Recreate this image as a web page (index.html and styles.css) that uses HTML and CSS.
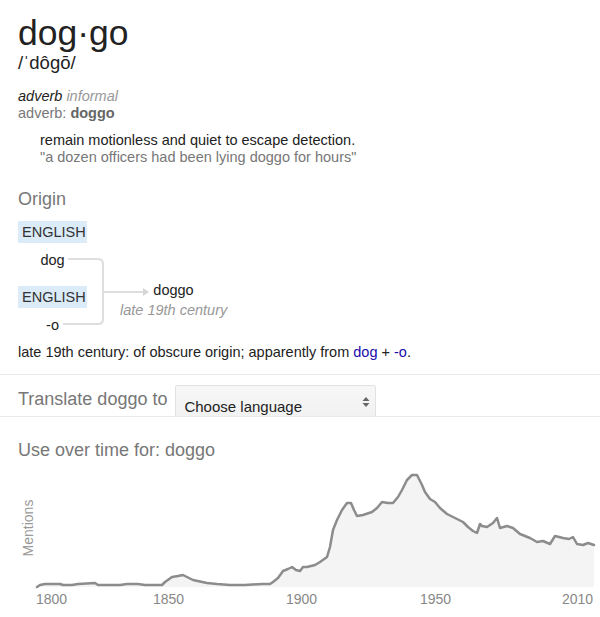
FILE: index.html
```html
<!DOCTYPE html>
<html lang="en">
<head>
<meta charset="utf-8">
<title>doggo</title>
<link rel="stylesheet" href="styles.css">
</head>
<body>
<div class="page">
  <section class="entry">
    <h1 class="word">dog·go</h1>
    <div class="pron">/ˈdôgō/</div>
    <div class="pos">
      <div><i class="pos-main">adverb</i> <i class="pos-note">informal</i></div>
      <div class="pos-forms">adverb: <b>doggo</b></div>
    </div>
    <div class="def">
      <div class="def-text">remain motionless and quiet to escape detection.</div>
      <div class="def-example">"a dozen officers had been lying doggo for hours"</div>
    </div>
    <h2 class="section-title">Origin</h2>
    <div class="diagram">
      <div class="sources">
        <div class="source">
          <span class="lang">ENGLISH</span>
          <span class="src-word">dog</span>
        </div>
        <div class="source">
          <span class="lang">ENGLISH</span>
          <span class="src-word">-o</span>
        </div>
      </div>
      <div class="result">
        <div class="res-word">doggo</div>
        <div class="res-date">late 19th century</div>
      </div>
      <svg class="connectors" width="160" height="115" viewBox="0 0 160 115" aria-hidden="true">
        <path d="M50 38 H80 Q85 38 85 43 V98 Q85 103 80 103 H45" fill="none" stroke="#dedede" stroke-width="2"/>
        <path d="M86 71 H126" fill="none" stroke="#dedede" stroke-width="2"/>
        <path d="M125 67 L131 71 L125 75 Z" fill="#d6d6d6"/>
      </svg>
    </div>
    <p class="etym">late 19th century: of obscure origin; apparently from <span class="link">dog</span> + <span class="link">-o</span>.</p>
  </section>
  <div class="translate">
    <span class="translate-label">Translate doggo to</span>
    <div class="select">
      <span>Choose language</span>
      <svg class="select-arrows" width="8" height="12" viewBox="0 0 8 12" aria-hidden="true">
        <path d="M4 1 L7.5 5 H0.5 Z" fill="#666"/>
        <path d="M4 11 L7.5 7 H0.5 Z" fill="#666"/>
      </svg>
    </div>
  </div>
  <section class="usage">
    <h2 class="section-title usage-title">Use over time for: doggo</h2>
    <svg class="chart" width="600" height="156" viewBox="0 461 600 156">
      <path class="area" d="M37 587 L40 585 L45 584 L60 584 L63 585 L72 585 L78 584 L95 583 L98 585 L120 585 L127 584 L138 584 L145 585 L162 585 L165 582 L172 577 L178 576 L183 575 L187 577 L193 580 L207 583 L217 584 L230 585 L245 585 L262 584 L270 584 L273 582 L278 578 L283 571 L288 569 L292 567 L296 570 L300 571 L303 567 L307 567 L315 565 L320 562 L327 557 L330 547 L333 530 L337 520 L342 510 L347 503 L351 503 L354 510 L357 516 L363 515 L372 512 L377 508 L382 502 L388 503 L393 503 L398 497 L402 490 L407 480 L412 475 L417 475 L422 485 L425 492 L430 499 L435 502 L440 508 L447 514 L455 518 L463 522 L468 527 L473 531 L477 533 L480 524 L482 526 L487 527 L493 523 L497 518 L500 528 L507 526 L513 528 L520 534 L530 538 L537 542 L543 541 L550 544 L555 536 L563 538 L569 539 L573 537 L577 544 L583 545 L588 543 L594 545 L594 587 Z"/>
      <path class="line" d="M37 587 L40 585 L45 584 L60 584 L63 585 L72 585 L78 584 L95 583 L98 585 L120 585 L127 584 L138 584 L145 585 L162 585 L165 582 L172 577 L178 576 L183 575 L187 577 L193 580 L207 583 L217 584 L230 585 L245 585 L262 584 L270 584 L273 582 L278 578 L283 571 L288 569 L292 567 L296 570 L300 571 L303 567 L307 567 L315 565 L320 562 L327 557 L330 547 L333 530 L337 520 L342 510 L347 503 L351 503 L354 510 L357 516 L363 515 L372 512 L377 508 L382 502 L388 503 L393 503 L398 497 L402 490 L407 480 L412 475 L417 475 L422 485 L425 492 L430 499 L435 502 L440 508 L447 514 L455 518 L463 522 L468 527 L473 531 L477 533 L480 524 L482 526 L487 527 L493 523 L497 518 L500 528 L507 526 L513 528 L520 534 L530 538 L537 542 L543 541 L550 544 L555 536 L563 538 L569 539 L573 537 L577 544 L583 545 L588 543 L594 545"/>
      <text class="axis-label" x="33" y="528" transform="rotate(-90 33 528)" text-anchor="middle">Mentions</text>
      <text class="year" x="36" y="604">1800</text>
      <text class="year" x="153" y="604">1850</text>
      <text class="year" x="286" y="604">1900</text>
      <text class="year" x="420" y="604">1950</text>
      <text class="year" x="562" y="604">2010</text>
    </svg>
  </section>
</div>
</body>
</html>
```
FILE: styles.css
```css
html, body {
  margin: 0;
  padding: 0;
  background: #fff;
}

body {
  font-family: "Liberation Sans", Arial, sans-serif;
  font-size: 14.5px;
  color: #222;
}

.page {
  width: 600px;
  height: 617px;
  overflow: hidden;
}

.entry {
  padding: 13px 18px 0;
  border-bottom: 1px solid #ebebeb;
  padding-bottom: 13px;
}

.word {
  margin: 0;
  font-size: 35.5px;
  font-weight: normal;
  line-height: 40px;
  color: #222;
}

.pron {
  font-size: 18.5px;
  line-height: 20px;
  color: #222;
}

.pos {
  margin-top: 15px;
  line-height: 17px;
}

.pos-main {
  color: #222;
}

.pos-note {
  color: #999;
}

.pos-forms {
  color: #777;
}

.pos-forms b {
  color: #666;
}

.def {
  margin-top: 10px;
  padding-left: 22px;
  line-height: 17px;
}

.def-example {
  color: #777;
}

.section-title {
  margin: 22px 0 0;
  font-size: 18px;
  font-weight: normal;
  line-height: 22px;
  color: #777;
}

.diagram {
  position: relative;
  display: flex;
  margin-top: 11px;
  height: 115px;
}

.sources {
  display: flex;
  flex-direction: column;
  gap: 15px;
  width: 69px;
}

.source {
  display: flex;
  flex-direction: column;
  gap: 6px;
}

.lang {
  display: block;
  background: #dcebf8;
  color: #333;
  line-height: 22px;
  padding: 0 4px;
}

.src-word {
  display: block;
  text-align: center;
  line-height: 22px;
  color: #222;
}

.result {
  margin-left: 33px;
  margin-top: 59px;
  width: 107px;
  text-align: center;
  line-height: 20px;
}

.res-word {
  color: #222;
}

.res-date {
  color: #999;
  font-style: italic;
  white-space: nowrap;
}

.connectors {
  position: absolute;
  left: 0;
  top: 0;
}

.etym {
  margin: 8px 0 0;
  line-height: 17px;
}

.link {
  color: #1a0dab;
}

.translate {
  display: flex;
  align-items: flex-start;
  gap: 8px;
  height: 41px;
  padding: 0 18px;
  overflow: hidden;
  border-bottom: 1px solid #ebebeb;
}

.translate-label {
  margin-top: 13px;
  font-size: 18px;
  line-height: 22px;
  color: #777;
}

.select {
  position: relative;
  margin-top: 10px;
  width: 201px;
  height: 36px;
  box-sizing: border-box;
  border: 1px solid #e2e2e2;
  border-radius: 2px;
  background: linear-gradient(#f7f7f7, #f1f1f1);
  padding: 12px 0 0 8px;
  font-size: 15px;
  line-height: 18px;
  color: #222;
  flex: none;
}

.select-arrows {
  position: absolute;
  right: 5px;
  top: 10px;
}

.usage {
  padding: 0;
}

.usage-title {
  margin: 22px 18px 0;
}

.chart {
  display: block;
}

.area {
  fill: #f4f4f4;
  stroke: none;
}

.line {
  fill: none;
  stroke: #8c8c8c;
  stroke-width: 2.5;
  stroke-linejoin: round;
  stroke-linecap: round;
}

.axis-label,
.year {
  font-family: "Liberation Sans", Arial, sans-serif;
  font-size: 14px;
  fill: #888;
}

.axis-label {
  fill: #999;
}
```
